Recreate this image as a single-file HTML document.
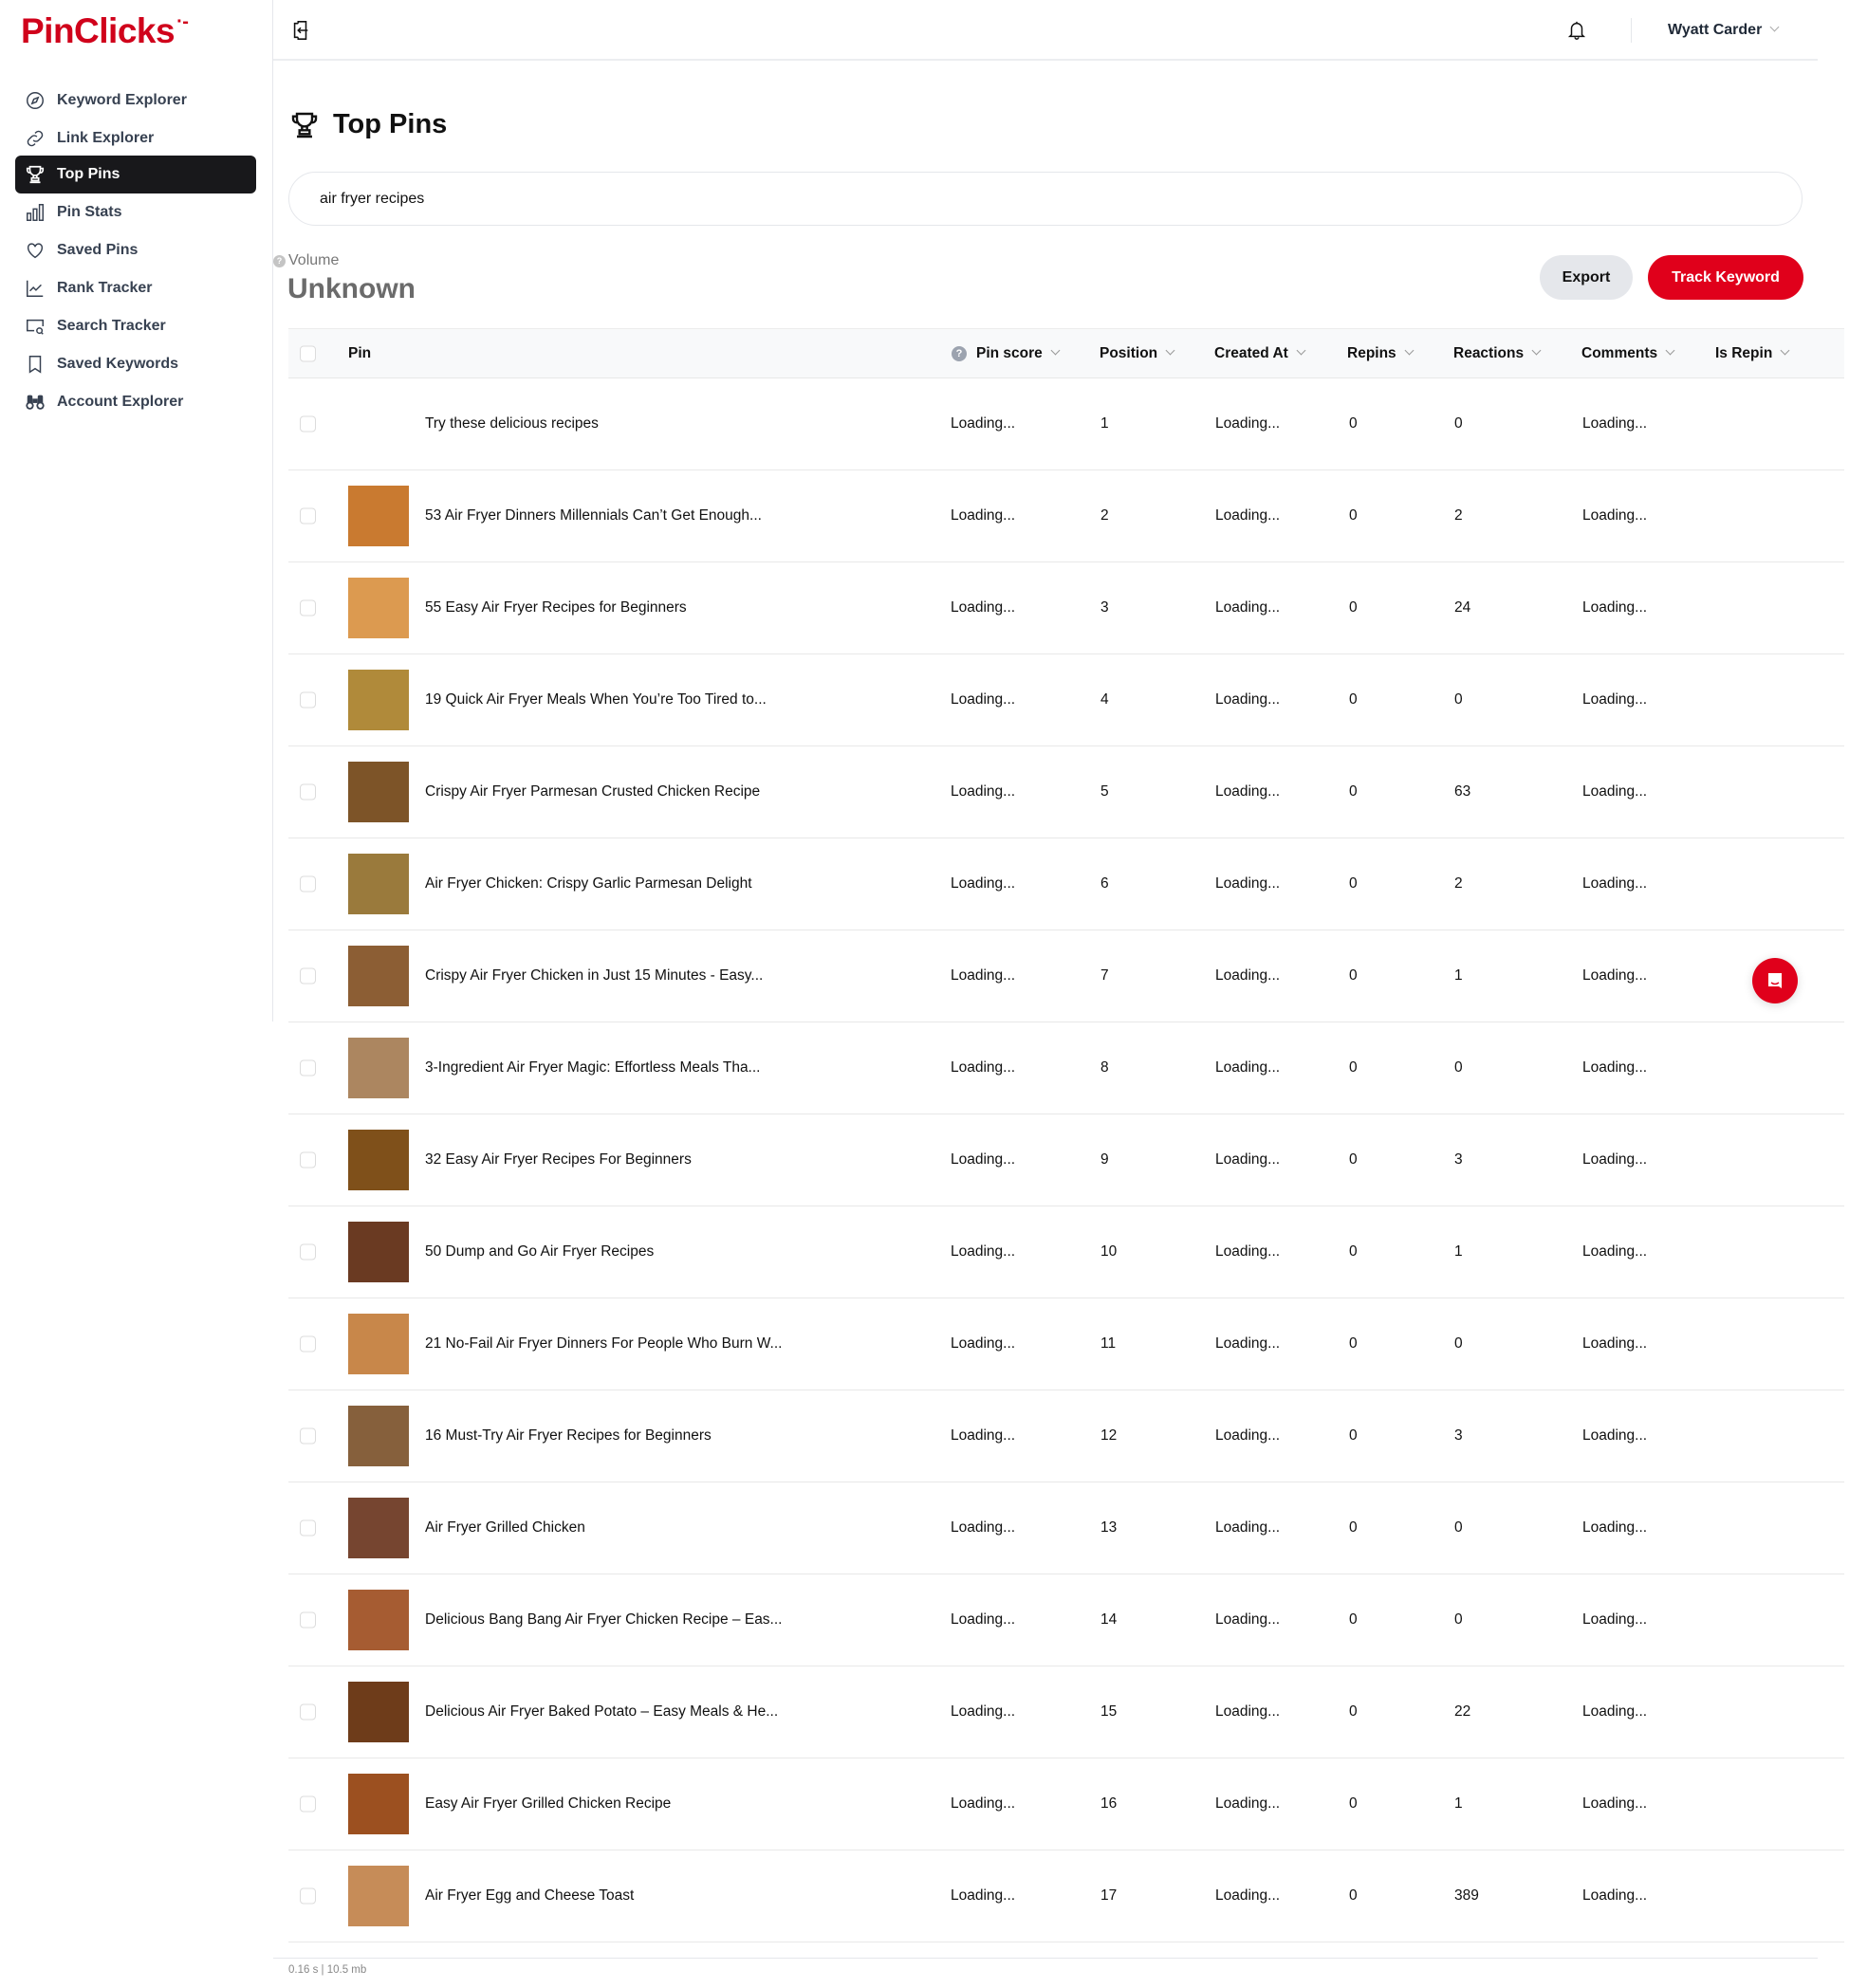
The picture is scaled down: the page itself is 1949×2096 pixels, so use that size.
<!DOCTYPE html>
<html><head><meta charset="utf-8"><style>
*{box-sizing:border-box;margin:0;padding:0}
body{width:1949px;height:2096px;position:relative;background:#fff;font-family:"Liberation Sans",Arial,sans-serif;color:#111;overflow:hidden}
.a{position:absolute}
.side{left:0;top:0;width:288px;height:1077px;border-right:1px solid #e5e7eb}
.logo{left:22px;top:12px;font-size:37px;font-weight:bold;color:#d0021b;letter-spacing:-0.5px}
.nav{left:16px;width:254px;height:40px;border-radius:6px;display:flex;align-items:center;font-size:16px;color:#374151;font-weight:bold}
.nav svg{margin-left:10px;margin-right:12px;width:22px;height:22px}
.nav.act{background:#18181b;color:#fff}
.hdr{left:288px;top:0;width:1628px;height:64px;border-bottom:2px solid #eceef0}
.row{left:304px;width:1640px;height:97px;border-bottom:1px solid #e8e8e8;font-size:15.5px}
.row>*{position:absolute;top:50%;transform:translateY(-50%)}
.cb{left:12px;width:17px;height:17px;border:1px solid #dcdcdc;border-radius:4px;background:#fff}
.th{left:63px;width:64px;height:64px}
.hd{font-weight:bold;font-size:15.5px;color:#111}
.chev{display:inline-block;width:7px;height:7px;border-right:1px solid #999;border-bottom:1px solid #999;transform:rotate(45deg);margin-left:10px;position:relative;top:-4px}
</style></head><body>
<div class="a side"></div>
<div class="a logo">PinClicks<span style="font-size:20px;position:relative;top:-16px;left:2px">·‐</span></div>

<div class="a nav" style="top:86px"><svg viewBox="0 0 24 24" fill="none" stroke="#374151" stroke-width="1.6"><circle cx="12" cy="12" r="9"/><path d="M15.5 8.5l-2 5-5 2 2-5z"/></svg>Keyword Explorer</div>
<div class="a nav" style="top:126px"><svg viewBox="0 0 24 24" fill="none" stroke="#374151" stroke-width="1.6"><path d="M10 14a4 4 0 006 0l3-3a4 4 0 00-6-6l-1 1M14 10a4 4 0 00-6 0l-3 3a4 4 0 006 6l1-1"/></svg>Link Explorer</div>
<div class="a nav act" style="top:164px"><svg viewBox="0 0 24 24" fill="none" stroke="#fff" stroke-width="1.8"><path d="M6 3h12v4a6 6 0 01-12 0zM6 5H3v2a3 3 0 003 3M18 5h3v2a3 3 0 01-3 3M10 13v3h4v-3M8 16h8v3H8zM6 21h12"/></svg>Top Pins</div>
<div class="a nav" style="top:204px"><svg viewBox="0 0 24 24" fill="none" stroke="#374151" stroke-width="1.6"><rect x="3" y="13" width="4" height="8"/><rect x="10" y="8" width="4" height="13"/><rect x="17" y="3" width="4" height="18"/></svg>Pin Stats</div>
<div class="a nav" style="top:244px"><svg viewBox="0 0 24 24" fill="none" stroke="#374151" stroke-width="1.6"><path d="M12 20s-8-5-8-11a4 4 0 018-1 4 4 0 018 1c0 6-8 11-8 11z"/></svg>Saved Pins</div>
<div class="a nav" style="top:284px"><svg viewBox="0 0 24 24" fill="none" stroke="#374151" stroke-width="1.6"><path d="M3 3v18h18M6 15l4-4 3 3 6-6"/></svg>Rank Tracker</div>
<div class="a nav" style="top:324px"><svg viewBox="0 0 24 24" fill="none" stroke="#374151" stroke-width="1.6"><path d="M11 17H3V5h18v7"/><circle cx="17" cy="17" r="3"/><path d="M19 19l2 2"/></svg>Search Tracker</div>
<div class="a nav" style="top:364px"><svg viewBox="0 0 24 24" fill="none" stroke="#374151" stroke-width="1.6"><path d="M6 3h12v18l-6-4-6 4z"/></svg>Saved Keywords</div>
<div class="a nav" style="top:404px"><svg viewBox="0 0 24 24" fill="#374151"><circle cx="6" cy="16" r="4.5"/><circle cx="18" cy="16" r="4.5"/><rect x="3" y="4" width="6" height="10" rx="2"/><rect x="15" y="4" width="6" height="10" rx="2"/><rect x="9" y="8" width="6" height="5"/><circle cx="6" cy="16" r="2.5" fill="#fff"/><circle cx="18" cy="16" r="2.5" fill="#fff"/></svg>Account Explorer</div>

<div class="a hdr"></div>
<svg class="a" style="left:306px;top:21px" width="22" height="22" viewBox="0 0 24 24" fill="none" stroke="#111" stroke-width="1.7"><path d="M9 4V2h9v20H9v-2M9 4H5v16h4M20 12H9M12 9l-3 3 3 3"/></svg>
<svg class="a" style="left:1651px;top:20px" width="22" height="24" viewBox="0 0 24 24" fill="none" stroke="#111" stroke-width="1.6"><path d="M6 17V10a6 6 0 0112 0v7l2 2H4zM10 20a2 2 0 004 0M12 2v2"/></svg>
<div class="a" style="left:1719px;top:19px;width:1px;height:26px;background:#e5e7eb"></div>
<div class="a" style="left:1758px;top:23px;font-size:16px;font-weight:bold;color:#1f2937">Wyatt Carder<span class="chev" style="border-color:#aaa"></span></div>

<svg class="a" style="left:305px;top:115px" width="32" height="34" viewBox="0 0 24 24" fill="none" stroke="#111" stroke-width="1.8"><path d="M6 3h12v4a6 6 0 01-12 0zM6 5H3v2a3 3 0 003 3M18 5h3v2a3 3 0 01-3 3M10 13v3h4v-3M8 16h8v3H8zM6 21h12"/></svg>
<div class="a" style="left:351px;top:115px;font-size:29px;font-weight:bold">Top Pins</div>

<div class="a" style="left:304px;top:181px;width:1596px;height:57px;border:1px solid #e5e7eb;border-radius:29px"></div>
<div class="a" style="left:337px;top:201px;font-size:16px">air fryer recipes</div>

<div class="a" style="left:288px;top:269px;width:13px;height:13px;border-radius:50%;background:#c4c4c4;color:#fff;font-size:9px;text-align:center;line-height:13px;font-weight:bold">?</div>
<div class="a" style="left:304px;top:266px;font-size:16px;color:#777">Volume</div>
<div class="a" style="left:303px;top:288px;font-size:30px;font-weight:bold;color:#6b6b6b">Unknown</div>

<div class="a" style="left:1623px;top:269px;width:98px;height:47px;border-radius:24px;background:#e5e7eb;font-size:16px;font-weight:bold;text-align:center;line-height:47px">Export</div>
<div class="a" style="left:1737px;top:269px;width:164px;height:47px;border-radius:24px;background:#e0001b;color:#fff;font-size:16px;font-weight:bold;text-align:center;line-height:47px">Track Keyword</div>

<div class="a row" style="top:346px;height:53px;background:#f8f9fa;border-top:1px solid #ececec">
<div class="cb"></div>
<div class="hd" style="left:63px">Pin</div>
<div style="left:699px;width:16px;height:16px;border-radius:50%;background:#9ca3af;color:#fff;font-size:11px;text-align:center;line-height:16px;font-weight:bold">?</div>
<div class="hd" style="left:725px">Pin score<span class="chev"></span></div>
<div class="hd" style="left:855px">Position<span class="chev"></span></div>
<div class="hd" style="left:976px">Created At<span class="chev"></span></div>
<div class="hd" style="left:1116px">Repins<span class="chev"></span></div>
<div class="hd" style="left:1228px">Reactions<span class="chev"></span></div>
<div class="hd" style="left:1363px">Comments<span class="chev"></span></div>
<div class="hd" style="left:1504px">Is Repin<span class="chev"></span></div>
</div>

<div id="rows"></div>
<script>
var d=[["Try these delicious recipes","",1,0],
["53 Air Fryer Dinners Millennials Can’t Get Enough...","#c97a30",2,2],
["55 Easy Air Fryer Recipes for Beginners","#dc9a50",3,24],
["19 Quick Air Fryer Meals When You’re Too Tired to...","#b08a3a",4,0],
["Crispy Air Fryer Parmesan Crusted Chicken Recipe","#7d5428",5,63],
["Air Fryer Chicken: Crispy Garlic Parmesan Delight","#9a7a3c",6,2],
["Crispy Air Fryer Chicken in Just 15 Minutes - Easy...","#8c5e34",7,1],
["3-Ingredient Air Fryer Magic: Effortless Meals Tha...","#ac8660",8,0],
["32 Easy Air Fryer Recipes For Beginners","#7f501a",9,3],
["50 Dump and Go Air Fryer Recipes","#6a3a22",10,1],
["21 No-Fail Air Fryer Dinners For People Who Burn W...","#c8874a",11,0],
["16 Must-Try Air Fryer Recipes for Beginners","#86603c",12,3],
["Air Fryer Grilled Chicken","#764530",13,0],
["Delicious Bang Bang Air Fryer Chicken Recipe – Eas...","#a65c32",14,0],
["Delicious Air Fryer Baked Potato – Easy Meals & He...","#6e3c1a",15,22],
["Easy Air Fryer Grilled Chicken Recipe","#9c5020",16,1],
["Air Fryer Egg and Cheese Toast","#c68c58",17,389]];
var h="";
d.forEach(function(r,i){
h+='<div class="a row" style="top:'+(399+i*97)+'px"><div class="cb"></div>'+(r[1]?'<div class="th" style="background:'+r[1]+'"></div>':'')+
'<div style="left:144px">'+r[0]+'</div><div style="left:698px">Loading...</div><div style="left:856px">'+r[2]+'</div><div style="left:977px">Loading...</div><div style="left:1118px">0</div><div style="left:1229px">'+r[3]+'</div><div style="left:1364px">Loading...</div></div>';
});
document.getElementById("rows").innerHTML=h;
</script>

<div class="a" style="left:1847px;top:1010px;width:48px;height:48px;border-radius:50%;background:#e0001b;box-shadow:0 2px 10px rgba(0,0,0,.15)">
<svg width="48" height="48" viewBox="0 0 48 48"><path d="M17 16h14v16l-3-2H17z" fill="#fff"/><path d="M20 26q4 3 8 0" stroke="#e0001b" stroke-width="1.5" fill="none"/></svg></div>

<div class="a" style="left:288px;top:2064px;width:1628px;height:1px;background:#e5e7eb"></div>
<div class="a" style="left:304px;top:2071px;font-size:11.5px;color:#888">0.16 s | 10.5 mb</div>
</body></html>
